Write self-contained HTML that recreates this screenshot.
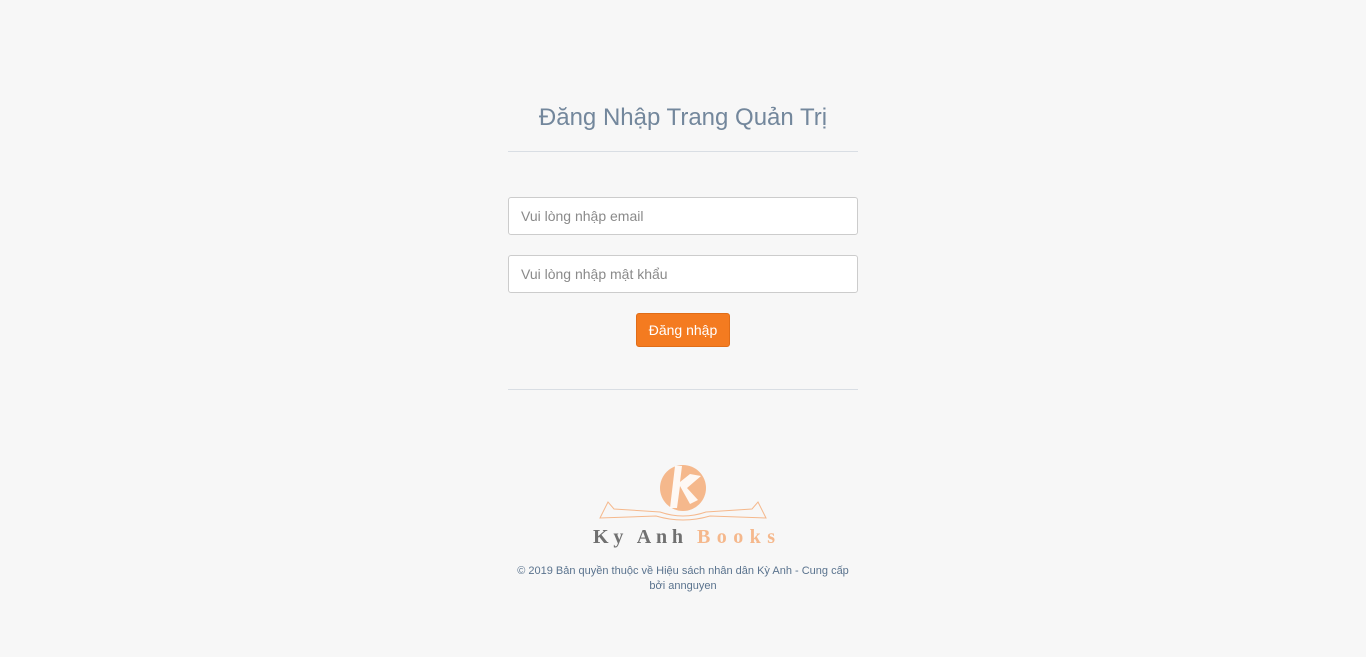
<!DOCTYPE html>
<html><head><meta charset="utf-8"><style>
body{margin:0;background:#f7f7f7;font-family:"Liberation Sans",sans-serif;width:1366px;height:657px;position:relative;overflow:hidden}
.a{position:absolute}
h1{position:absolute;left:508px;width:350px;top:104px;margin:0;text-align:center;font-weight:normal;font-size:24px;color:#73879c}
.hr{position:absolute;left:508px;width:350px;height:1px;background:#d9dee4}
.in{position:absolute;left:508px;width:348px;height:36px;border:1px solid #ccc;border-radius:3px;background:#fff;font-size:14px;color:#8a8a8a;line-height:36px;text-indent:12px;box-sizing:content-box}
.btn{position:absolute;left:636px;top:313px;width:92px;height:32px;background:#f47b20;border:1px solid #e06d18;border-radius:3px;color:#fff;font-size:14px;line-height:32px;text-align:center}
.ft{position:absolute;left:508px;width:350px;top:564px;text-align:center;font-size:11px;line-height:15px;color:#5a738e}
</style></head><body>
<h1>Đăng Nhập Trang Quản Trị</h1>
<div class="hr" style="top:151px"></div>
<div class="in" style="top:197px">Vui lòng nhập email</div>
<div class="in" style="top:255px">Vui lòng nhập mật khẩu</div>
<div class="btn">Đăng nhập</div>
<div class="hr" style="top:389px"></div>
<svg class="a" style="left:590px;top:464px" width="190" height="85" viewBox="0 0 190 85">
<circle cx="93" cy="24" r="23" fill="#f5b88c"/>
<path d="M85 2 L80 44 L87 44 L90 22 L100 40 L108 36 L97 24 L111 12 L100 10 L90 18 L92 2Z" fill="#fff" opacity="0.9"/>
<path d="M10 54 L18 38 L24 45 L70 48 Q93 56 116 48 L162 45 L168 38 L176 54 L120 52 Q93 60 66 52Z" fill="none" stroke="#f5b88c" stroke-width="1"/>
<text x="3" y="79" font-family="Liberation Serif,serif" font-weight="bold" font-size="20" textLength="90" lengthAdjust="spacing" fill="#707070">Ky Anh</text>
<text x="107" y="79" font-family="Liberation Serif,serif" font-weight="bold" font-size="20" textLength="78" lengthAdjust="spacing" fill="#f5b88c">Books</text>
</svg>
<div class="ft">© 2019 Bản quyền thuộc về Hiệu sách nhân dân Kỳ Anh - Cung cấp<br>bởi annguyen</div>
</body></html>
